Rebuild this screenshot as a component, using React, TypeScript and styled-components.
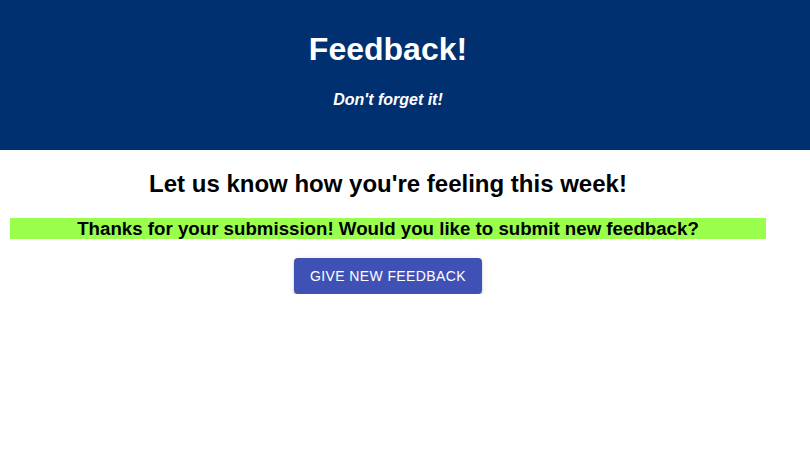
import React from "react";
import styled, { createGlobalStyle } from "styled-components";

const Global = createGlobalStyle`
  html, body { margin: 0; padding: 0; background: #ffffff; }
  body { font-family: "Liberation Sans", Arial, Helvetica, sans-serif; }
`;

const Header = styled.header`
  background: #003070;
  height: 150px;
  color: #ffffff;
  display: flex;
  justify-content: flex-start;
`;

const Inner = styled.div`
  width: 776px;
  display: flex;
  flex-direction: column;
  align-items: center;
`;

const Title = styled.h1`
  margin: 31px 0 0;
  font-size: 32px;
  line-height: 37px;
  font-weight: 700;
`;

const Subtitle = styled.p`
  margin: 23px 0 0;
  font-size: 16px;
  line-height: 18px;
  font-weight: 700;
  font-style: italic;
`;

const Main = styled.main`
  width: 776px;
  display: flex;
  flex-direction: column;
  align-items: center;
`;

const Prompt = styled.h2`
  margin: 20px 0 0;
  font-size: 24px;
  line-height: 28px;
  font-weight: 700;
  color: #000000;
`;

const Banner = styled.div`
  margin: 20px 10px 0;
  align-self: stretch;
  background: #99ff4c;
  font-size: 18.7px;
  line-height: 21px;
  font-weight: 700;
  color: #000000;
  text-align: center;
`;

const Button = styled.button`
  margin-top: 19px;
  height: 36px;
  padding: 6px 16px;
  border: none;
  border-radius: 4px;
  background: #3f51b5;
  color: #ffffff;
  font-family: "Liberation Sans", Arial, Helvetica, sans-serif;
  font-size: 14px;
  font-weight: 400;
  letter-spacing: 0.02857em;
  text-transform: uppercase;
  box-shadow: 0 3px 1px -2px rgba(0,0,0,0.2), 0 2px 2px 0 rgba(0,0,0,0.14), 0 1px 5px 0 rgba(0,0,0,0.12);
  cursor: pointer;
`;

export default function App() {
  return (
    <>
      <Global />
      <Header>
        <Inner>
          <Title>Feedback!</Title>
          <Subtitle>Don't forget it!</Subtitle>
        </Inner>
      </Header>
      <Main>
        <Prompt>Let us know how you're feeling this week!</Prompt>
        <Banner>Thanks for your submission! Would you like to submit new feedback?</Banner>
        <Button>Give new feedback</Button>
      </Main>
    </>
  );
}
